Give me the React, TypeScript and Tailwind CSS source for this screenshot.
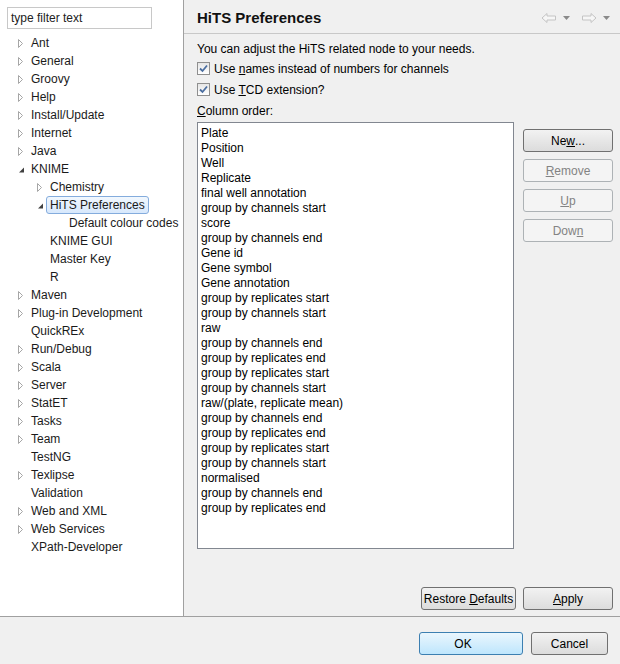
import React from 'react'

type Node = { label: string; level: number; state?: 'closed' | 'open'; selected?: boolean }

const tree: Node[] = [
  { label: 'Ant', level: 0, state: 'closed' },
  { label: 'General', level: 0, state: 'closed' },
  { label: 'Groovy', level: 0, state: 'closed' },
  { label: 'Help', level: 0, state: 'closed' },
  { label: 'Install/Update', level: 0, state: 'closed' },
  { label: 'Internet', level: 0, state: 'closed' },
  { label: 'Java', level: 0, state: 'closed' },
  { label: 'KNIME', level: 0, state: 'open' },
  { label: 'Chemistry', level: 1, state: 'closed' },
  { label: 'HiTS Preferences', level: 1, state: 'open', selected: true },
  { label: 'Default colour codes', level: 2 },
  { label: 'KNIME GUI', level: 1 },
  { label: 'Master Key', level: 1 },
  { label: 'R', level: 1 },
  { label: 'Maven', level: 0, state: 'closed' },
  { label: 'Plug-in Development', level: 0, state: 'closed' },
  { label: 'QuickREx', level: 0 },
  { label: 'Run/Debug', level: 0, state: 'closed' },
  { label: 'Scala', level: 0, state: 'closed' },
  { label: 'Server', level: 0, state: 'closed' },
  { label: 'StatET', level: 0, state: 'closed' },
  { label: 'Tasks', level: 0, state: 'closed' },
  { label: 'Team', level: 0, state: 'closed' },
  { label: 'TestNG', level: 0 },
  { label: 'Texlipse', level: 0, state: 'closed' },
  { label: 'Validation', level: 0 },
  { label: 'Web and XML', level: 0, state: 'closed' },
  { label: 'Web Services', level: 0, state: 'closed' },
  { label: 'XPath-Developer', level: 0 },
]

const columns = [
  'Plate', 'Position', 'Well', 'Replicate', 'final well annotation',
  'group by channels start', 'score', 'group by channels end', 'Gene id',
  'Gene symbol', 'Gene annotation', 'group by replicates start',
  'group by channels start', 'raw', 'group by channels end',
  'group by replicates end', 'group by replicates start',
  'group by channels start', 'raw/(plate, replicate mean)',
  'group by channels end', 'group by replicates end',
  'group by replicates start', 'group by channels start', 'normalised',
  'group by channels end', 'group by replicates end',
]

const indent = ['pl-[16px]', 'pl-[35px]', 'pl-[54px]']

function Twisty({ state }: { state?: 'closed' | 'open' }) {
  if (!state) return <span className="w-[15px] shrink-0" />
  if (state === 'open')
    return (
      <svg className="w-[15px] h-[18px] shrink-0" viewBox="0 0 15 18">
        <path d="M8 7.5 L8 12.5 L3 12.5 Z" fill="#404040" />
      </svg>
    )
  return (
    <svg className="w-[15px] h-[18px] shrink-0" viewBox="0 0 15 18">
      <path d="M2.5 5.5 L6.5 9.5 L2.5 13.5 Z" fill="none" stroke="#a6a6a6" strokeWidth="1" />
    </svg>
  )
}

function Checkbox() {
  return (
    <span className="w-[13px] h-[13px] border border-[#8f8f8f] bg-gradient-to-b from-[#e6e6e6] to-[#ffffff] flex items-center justify-center shrink-0">
      <svg className="w-[9px] h-[9px]" viewBox="0 0 9 9">
        <path d="M1 4.5 L3.5 7 L8 1.5" fill="none" stroke="#4b6ea0" strokeWidth="1.8" />
      </svg>
    </span>
  )
}

function Btn({ children, disabled, primary, className = '' }: { children: React.ReactNode; disabled?: boolean; primary?: boolean; className?: string }) {
  const look = primary
    ? 'border-[#3c7fb1] bg-gradient-to-b from-[#eaf6fd] to-[#bee6fd] text-black'
    : disabled
      ? 'border-[#adb2b5] bg-[#f4f4f4] text-[#838383]'
      : 'border-[#707070] bg-gradient-to-b from-[#f2f2f2] to-[#dcdcdc] text-black'
  return (
    <div className={`h-[23px] border rounded-[3px] flex items-center justify-center ${look} ${className}`}>
      {children}
    </div>
  )
}

function NavArrows() {
  return (
    <div className="flex items-center gap-[6px] pr-[10px]">
      <svg className="w-[16px] h-[12px]" viewBox="0 0 16 12">
        <path d="M1 6 L6 1.5 L6 4 L14.5 4 L14.5 8 L6 8 L6 10.5 Z" fill="#f6f6f6" stroke="#c4c4c4" strokeWidth="1" />
      </svg>
      <svg className="w-[7px] h-[4px]" viewBox="0 0 7 4"><path d="M0 0 L7 0 L3.5 4 Z" fill="#8a8a8a" /></svg>
      <svg className="w-[16px] h-[12px] ml-[5px]" viewBox="0 0 16 12">
        <path d="M15 6 L10 1.5 L10 4 L1.5 4 L1.5 8 L10 8 L10 10.5 Z" fill="#f6f6f6" stroke="#c4c4c4" strokeWidth="1" />
      </svg>
      <svg className="w-[7px] h-[4px]" viewBox="0 0 7 4"><path d="M0 0 L7 0 L3.5 4 Z" fill="#8a8a8a" /></svg>
    </div>
  )
}

export default function App() {
  return (
    <div className="w-[620px] h-[664px] bg-[#f0f0f0] flex flex-col text-[12px] text-black overflow-hidden" style={{ fontFamily: '"Liberation Sans", Arial, sans-serif' }}>
      <div className="flex h-[617px] border-b border-[#a0a0a0]">
        {/* Left: filter + tree */}
        <div className="w-[184px] bg-white border-r border-[#a0a0a0] flex flex-col shrink-0">
          <div className="pt-[7px] pl-[7px]">
            <div className="w-[145px] h-[22px] border border-[#c8c8c8] flex items-center pl-[3px] text-[#222]">type filter text</div>
          </div>
          <div className="pt-[5px] flex flex-col">
            {tree.map((n, i) => (
              <div key={i} className={`h-[18px] flex items-center ${indent[n.level]}`}>
                <Twisty state={n.state} />
                {n.selected ? (
                  <span className="h-[18px] ml-[-4px] px-[3px] flex items-center border border-[#84acdd] rounded-[3px] bg-gradient-to-b from-[#f2f8fe] to-[#d7e8fc] text-[#1a1a1a]">{n.label}</span>
                ) : (
                  <span className="text-[#1a1a1a]">{n.label}</span>
                )}
              </div>
            ))}
          </div>
        </div>

        {/* Right: page */}
        <div className="flex-1 flex flex-col">
          <div className="h-[34px] border-b border-[#c8c8c8] flex items-center justify-between pl-[13px] pt-[3px]">
            <span className="font-bold text-[15px] text-[#111]">HiTS Preferences</span>
            <NavArrows />
          </div>
          <div className="flex-1 flex flex-col pl-[13px] pr-[7px] pt-[6px]">
            <div className="h-[17px] flex items-center">You can adjust the HiTS related node to your needs.</div>
            <div className="h-[21px] flex items-center gap-[4px] mt-[1px]">
              <Checkbox />
              <span>Use <span className="underline">n</span>ames instead of numbers for channels</span>
            </div>
            <div className="h-[21px] flex items-center gap-[4px]">
              <Checkbox />
              <span>Use <span className="underline">T</span>CD extension?</span>
            </div>
            <div className="h-[20px] flex items-center mt-[1px]"><span><span className="underline">C</span>olumn order:</span></div>
            <div className="flex gap-[9px] mt-[1px]">
              <div className="w-[317px] h-[427px] bg-white border border-[#828790] pt-[3px] pl-[3px]">
                {columns.map((c, i) => (
                  <div key={i} className="h-[15px] leading-[15px]">{c}</div>
                ))}
              </div>
              <div className="w-[90px] flex flex-col gap-[7px] pt-[7px]">
                <Btn>Ne<span className="underline">w</span>...</Btn>
                <Btn disabled><span><span className="underline">R</span>emove</span></Btn>
                <Btn disabled><span><span className="underline">U</span>p</span></Btn>
                <Btn disabled><span>Dow<span className="underline">n</span></span></Btn>
              </div>
            </div>
            <div className="flex-1" />
            <div className="flex justify-end gap-[7px] pb-[6px]">
              <Btn className="w-[95px]"><span>Restore <span className="underline">D</span>efaults</span></Btn>
              <Btn className="w-[90px]"><span><span className="underline">A</span>pply</span></Btn>
            </div>
          </div>
        </div>
      </div>

      {/* Dialog buttons */}
      <div className="flex-1 flex justify-end items-start pt-[15px] pr-[12px] gap-[8px]">
        <Btn primary className="w-[104px] pr-[16px]">OK</Btn>
        <Btn className="w-[77px]">Cancel</Btn>
      </div>
    </div>
  )
}
